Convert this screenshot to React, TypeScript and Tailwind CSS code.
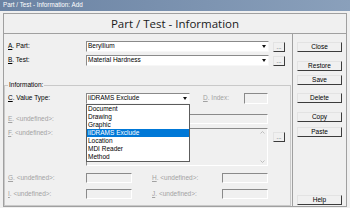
import React from "react";

const sans = "font-['Liberation_Sans',Arial,sans-serif]";

const Btn: React.FC<{ label: string; className?: string }> = ({ label, className }) => (
  <button
    className={
      "w-[45px] h-[10px] flex items-center justify-center text-[6.5px] leading-none text-black bg-[#f0f0f0] border-t border-l border-t-[#e3e3e3] border-l-[#e3e3e3] border-r border-b border-r-[#3c3c3c] border-b-[#3c3c3c] " +
      (className ?? "")
    }
  >
    {label}
  </button>
);

const Dots: React.FC<{ className?: string }> = ({ className }) => (
  <div
    className={
      "w-[12px] h-[10px] flex items-end justify-center pb-[1px] text-[6px] leading-none text-[#333] bg-[#f0f0f0] border-t border-l border-t-[#e3e3e3] border-l-[#e3e3e3] border-r border-b border-r-[#3c3c3c] border-b-[#3c3c3c] " +
      (className ?? "")
    }
  >
    ...
  </div>
);

const Arrow = () => (
  <div className="w-[8px] h-full flex items-center justify-center">
    <svg width="4" height="3" viewBox="0 0 4 3">
      <path d="M0 0h4L2 3z" fill="#111" />
    </svg>
  </div>
);

const Combo: React.FC<{ value: string; className: string }> = ({ value, className }) => (
  <div
    className={
      "h-[11px] flex items-center bg-white border-t border-l border-t-[#8a8a8a] border-l-[#8a8a8a] border-b border-r border-b-[#f7f7f7] border-r-[#f7f7f7] " +
      className
    }
  >
    <span className="flex-1 pl-[1px] text-[6.5px] leading-none text-black">{value}</span>
    <Arrow />
  </div>
);

const Sunken: React.FC<{ className: string; children?: React.ReactNode }> = ({ className, children }) => (
  <div
    className={
      "bg-[#f0f0f0] border-t border-l border-t-[#8a8a8a] border-l-[#8a8a8a] border-b border-r border-b-white border-r-white " +
      className
    }
  >
    {children}
  </div>
);

const Label: React.FC<{ k: string; text: string; off?: boolean; className?: string }> = ({
  k,
  text,
  off,
  className,
}) => (
  <span
    className={
      "text-[6.5px] leading-none whitespace-nowrap " +
      (off ? "text-[#a2a2a2] " : "text-black ") +
      (className ?? "")
    }
  >
    <u>{k}</u>. {text}
  </span>
);

const items = ["Document", "Drawing", "Graphic", "iiDRAMS Exclude", "Location", "MDI Reader", "Method"];

export default function App() {
  return (
    <div className={"w-[350px] h-[208px] bg-[#f0f0f0] overflow-hidden " + sans}>
      <div className="h-[11px] bg-gradient-to-r from-[#6b83a3] to-[#8aa0bb] flex items-center pl-[3px] text-white text-[6.3px] leading-none">
        Part / Test - Information: Add
      </div>

      <div className="px-[3px] pt-[2px]">
        <div className="h-[194px] border border-[#a0a0a0] flex flex-col">
          <div className="h-[20px] shrink-0 border-b border-[#a0a0a0] flex items-center justify-center">
            <span className="font-['Open_Sans',sans-serif] text-[11.5px] leading-none text-[#1a1a1a]">
              Part / Test - Information
            </span>
          </div>

          <div className="flex flex-1 min-h-0">
            <div className="w-[289px] border-r border-[#a0a0a0] flex flex-col">
              <div className="mt-[7px] flex items-center pl-[4px]">
                <Label k="A" text="Part:" className="w-[78px]" />
                <Combo value="Beryllium" className="w-[183px]" />
                <Dots className="ml-[4px]" />
              </div>
              <div className="mt-[3px] flex items-center pl-[4px]">
                <Label k="B" text="Test:" className="w-[78px]" />
                <Combo value="Material Hardness" className="w-[183px]" />
                <Dots className="ml-[4px]" />
              </div>

              <fieldset className="mt-[15px] mr-[1px] flex-1 border border-[#c9c9c9] px-0 pb-0">
                <legend className="ml-[3px] px-[1px] text-[6.5px] leading-[8px] text-black">Information:</legend>

                <div className="mt-[4px] flex items-center pl-[3px]">
                  <Label k="C" text="Value Type:" className="w-[78px]" />
                  <div className="relative">
                    <Combo value="iiDRAMS Exclude" className="w-[104px]" />
                    <div className="absolute left-0 top-full z-10 w-[104px] bg-white border border-[#5c5c5c]">
                      {items.map((it) => (
                        <div
                          key={it}
                          className={
                            "h-[8px] pl-[1px] flex items-center text-[6.5px] leading-none " +
                            (it === "iiDRAMS Exclude" ? "bg-[#0078d7] text-white" : "text-black")
                          }
                        >
                          {it}
                        </div>
                      ))}
                    </div>
                  </div>
                  <Label k="D" text="Index:" off className="ml-[13px] w-[41px]" />
                  <Sunken className="w-[24px] h-[11px]" />
                </div>

                <div className="mt-[10px] flex items-center pl-[3px]">
                  <Label k="E" text="<undefined>:" off className="w-[78px]" />
                  <Sunken className="w-[182px] h-[10px]" />
                </div>

                <div className="mt-[4px] flex items-start pl-[3px]">
                  <Label k="F" text="<undefined>:" off className="w-[78px] mt-[2px]" />
                  <Sunken className="w-[182px] h-[38px] flex justify-end">
                    <div className="w-[9px] h-full flex flex-col items-center justify-between py-[2px] text-[#b5b5b5]">
                      <svg width="5" height="3" viewBox="0 0 5 3">
                        <path d="M0.5 2.5L2.5 0.5L4.5 2.5" fill="none" stroke="#b0b0b0" strokeWidth="0.8" />
                      </svg>
                      <svg width="5" height="3" viewBox="0 0 5 3">
                        <path d="M0.5 0.5L2.5 2.5L4.5 0.5" fill="none" stroke="#b0b0b0" strokeWidth="0.8" />
                      </svg>
                    </div>
                  </Sunken>
                  <Dots className="ml-[5px] mt-[4px]" />
                </div>

                <div className="mt-[7px] flex items-center pl-[3px]">
                  <Label k="G" text="<undefined>:" off className="w-[78px]" />
                  <Sunken className="w-[46px] h-[10px]" />
                  <Label k="H" text="<undefined>:" off className="ml-[20px] w-[70px]" />
                  <Sunken className="w-[46px] h-[10px]" />
                </div>

                <div className="mt-[6px] flex items-center pl-[3px]">
                  <Label k="I" text="<undefined>:" off className="w-[78px]" />
                  <Sunken className="w-[46px] h-[10px]" />
                  <Label k="J" text="<undefined>:" off className="ml-[20px] w-[70px]" />
                  <Sunken className="w-[46px] h-[10px]" />
                </div>
              </fieldset>
            </div>

            <div className="flex-1 flex flex-col pl-[4px] pb-[1px]">
              <Btn label="Close" className="mt-[8px]" />
              <Btn label="Restore" className="mt-[9px]" />
              <Btn label="Save" className="mt-[4px]" />
              <Btn label="Delete" className="mt-[8px]" />
              <Btn label="Copy" className="mt-[9px]" />
              <Btn label="Paste" className="mt-[5px]" />
              <Btn label="Help" className="mt-auto" />
            </div>
          </div>
        </div>
      </div>
    </div>
  );
}
